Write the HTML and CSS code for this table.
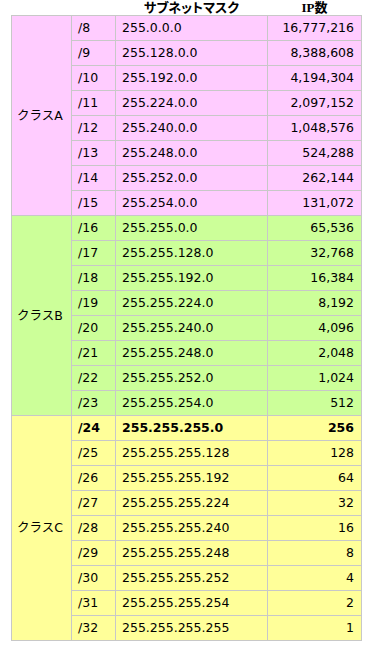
FILE: index.html
```html
<!DOCTYPE html>
<html lang="ja">
<head>
<meta charset="utf-8">
<title>サブネットマスク</title>
<link rel="stylesheet" href="styles.css">
</head>
<body>
<table class="subnet">
  <colgroup>
    <col class="c-class">
    <col class="c-prefix">
    <col class="c-mask">
    <col class="c-count">
  </colgroup>
  <thead>
    <tr>
      <th></th>
      <th></th>
      <th class="h">サブネットマスク</th>
      <th class="h">IP数</th>
    </tr>
  </thead>
  <tbody class="cls-a">
    <tr><td class="cls" rowspan="8">クラスA</td><td>/8</td><td>255.0.0.0</td><td class="num">16,777,216</td></tr>
    <tr><td>/9</td><td>255.128.0.0</td><td class="num">8,388,608</td></tr>
    <tr><td>/10</td><td>255.192.0.0</td><td class="num">4,194,304</td></tr>
    <tr><td>/11</td><td>255.224.0.0</td><td class="num">2,097,152</td></tr>
    <tr><td>/12</td><td>255.240.0.0</td><td class="num">1,048,576</td></tr>
    <tr><td>/13</td><td>255.248.0.0</td><td class="num">524,288</td></tr>
    <tr><td>/14</td><td>255.252.0.0</td><td class="num">262,144</td></tr>
    <tr><td>/15</td><td>255.254.0.0</td><td class="num">131,072</td></tr>
  </tbody>
  <tbody class="cls-b">
    <tr><td class="cls" rowspan="8">クラスB</td><td>/16</td><td>255.255.0.0</td><td class="num">65,536</td></tr>
    <tr><td>/17</td><td>255.255.128.0</td><td class="num">32,768</td></tr>
    <tr><td>/18</td><td>255.255.192.0</td><td class="num">16,384</td></tr>
    <tr><td>/19</td><td>255.255.224.0</td><td class="num">8,192</td></tr>
    <tr><td>/20</td><td>255.255.240.0</td><td class="num">4,096</td></tr>
    <tr><td>/21</td><td>255.255.248.0</td><td class="num">2,048</td></tr>
    <tr><td>/22</td><td>255.255.252.0</td><td class="num">1,024</td></tr>
    <tr><td>/23</td><td>255.255.254.0</td><td class="num">512</td></tr>
  </tbody>
  <tbody class="cls-c">
    <tr><td class="cls" rowspan="9">クラスC</td><td class="b">/24</td><td class="b">255.255.255.0</td><td class="num b">256</td></tr>
    <tr><td>/25</td><td>255.255.255.128</td><td class="num">128</td></tr>
    <tr><td>/26</td><td>255.255.255.192</td><td class="num">64</td></tr>
    <tr><td>/27</td><td>255.255.255.224</td><td class="num">32</td></tr>
    <tr><td>/28</td><td>255.255.255.240</td><td class="num">16</td></tr>
    <tr><td>/29</td><td>255.255.255.248</td><td class="num">8</td></tr>
    <tr><td>/30</td><td>255.255.255.252</td><td class="num">4</td></tr>
    <tr><td>/31</td><td>255.255.255.254</td><td class="num">2</td></tr>
    <tr><td>/32</td><td>255.255.255.255</td><td class="num">1</td></tr>
  </tbody>
</table>
</body>
</html>
```

FILE: styles.css
```css
html, body {
  margin: 0;
  padding: 0;
  background: #ffffff;
}

body {
  padding: 0 0 0 11px;
}

.subnet {
  border-collapse: collapse;
  table-layout: fixed;
  width: 350px;
  font-family: "DejaVu Sans", "Noto Sans CJK JP", sans-serif;
  font-size: 12.5px;
  color: #000000;
}

.c-class { width: 60px; }
.c-prefix { width: 44px; }
.c-mask { width: 152px; }
.c-count { width: 94px; }

.subnet th {
  height: 15px;
  padding: 0;
  line-height: 15px;
  font-family: "Liberation Serif", "Noto Sans CJK JP", serif;
  font-size: 13px;
  font-weight: bold;
  text-align: center;
  font-feature-settings: "palt";
  border: none;
}

.subnet td {
  padding: 5px 6px;
  line-height: 14px;
  border: 1px solid #c8c8c8;
  text-align: left;
  vertical-align: middle;
  white-space: nowrap;
}

.subnet td.num {
  text-align: right;
  padding-right: 7px;
}

.subnet td.cls {
  padding-left: 5px;
}

.cls-a td { background: #ffccff; }
.cls-b td { background: #ccff99; }
.cls-c td { background: #ffff99; }

.subnet td.b {
  font-weight: bold;
}
```
